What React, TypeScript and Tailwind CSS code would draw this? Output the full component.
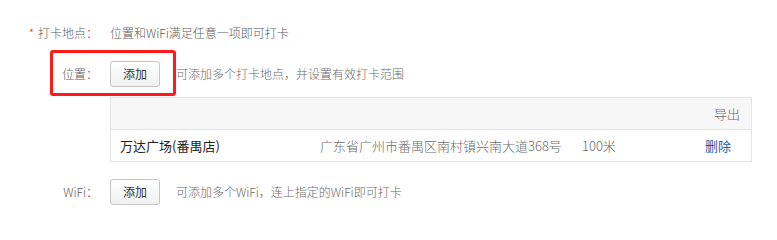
import React from 'react';

function AddButton() {
  return (
    <button className="h-[26px] w-[50px] rounded-[3px] border border-[#c6c6c6] bg-gradient-to-b from-white to-[#f1f1f1] text-[12px] font-normal text-[#333]">
      添加
    </button>
  );
}

export default function App() {
  return (
    <div
      className="relative h-[223px] w-[777px] bg-white pt-[21px] text-[12px] font-light text-[#5a5a5a]"
      style={{ fontFamily: '"Noto Sans CJK SC", "Noto Sans", sans-serif' }}
    >
      {/* 打卡地点 */}
      <div className="flex h-6 items-center">
        <div className="flex w-[98px] justify-end">
          <span className="mr-[4px] text-[#e0322e]">*</span>
          <span>打卡地点：</span>
        </div>
        <div className="ml-3">位置和WiFi满足任意一项即可打卡</div>
      </div>

      {/* 位置 */}
      <div className="mt-4 flex h-[26px] items-center">
        <div className="w-[98px] text-right">位置：</div>
        <div className="ml-3 flex items-center">
          <AddButton />
          <span className="ml-[16px] text-[#6a6a6a]">可添加多个打卡地点，并设置有效打卡范围</span>
        </div>
      </div>

      {/* 位置列表 */}
      <div className="ml-[110px] mt-[10px] w-[642px] border border-[#e4e4e4] text-[13px]">
        <div className="flex h-[32px] items-center justify-end border-b border-[#e4e4e4] bg-[#f7f7f7] pr-[11px] text-[#6a6a6a]">
          导出
        </div>
        <div className="grid h-[31px] grid-cols-[209px_262px_123px_1fr] items-center">
          <div className="pl-[9px] font-normal text-[#222]">万达广场(番禺店)</div>
          <div className="text-[#6a6a6a]">广东省广州市番禺区南村镇兴南大道368号</div>
          <div className="text-[#6a6a6a]">100米</div>
          <div className="font-normal text-[#1d5da6]">删除</div>
        </div>
      </div>

      {/* WiFi */}
      <div className="mt-[17px] flex h-[26px] items-center">
        <div className="w-[98px] text-right">WiFi：</div>
        <div className="ml-3 flex items-center">
          <AddButton />
          <span className="ml-[16px] text-[#6a6a6a]">可添加多个WiFi，连上指定的WiFi即可打卡</span>
        </div>
      </div>

      {/* 标注框 */}
      <div className="pointer-events-none absolute left-[50px] top-[50px] h-[46px] w-[126px] rounded-[3px] border-[3px] border-[#ff1a1a]" />
    </div>
  );
}
